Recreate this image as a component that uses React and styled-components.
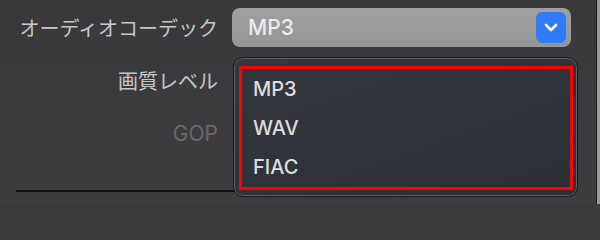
import styled, { createGlobalStyle } from 'styled-components';

const GlobalStyle = createGlobalStyle`
    html, body {
        margin: 0;
        padding: 0;
        background: #3b3b3d;
        overflow: hidden;
    }
`;

const Window = styled.div`
    display: flex;
    width: 600px;
    height: 204px;
    overflow: hidden;
`;

const Panel = styled.div`
    position: relative;
    width: 596px;
    height: 204px;
    flex-shrink: 0;
    background: linear-gradient(180deg, #39393b 0%, #3d3d3f 100%);
    font-family: Inter, "Noto Sans CJK JP", sans-serif;
`;

const Edge = styled.div`
    width: 1px;
    background: #1e1e20;
`;

const Neighbor = styled.div`
    flex: 1;
    background: #9a9a9c;
`;

const Form = styled.div`
    display: grid;
    grid-template-columns: 202px 339px;
    column-gap: 14px;
    padding: 8px 0 0 16px;
`;

const Label = styled.div`
    height: ${(p) => p.$h}px;
    display: flex;
    align-items: center;
    justify-content: flex-end;
    font-family: Inter, "Noto Sans CJK JP", sans-serif;
    font-size: ${(p) => (p.$disabled ? 21 : 20)}px;
    color: ${(p) => (p.$disabled ? '#69696b' : '#c6c6c8')};
`;

const Select = styled.div`
    height: 39px;
    display: flex;
    align-items: center;
    justify-content: space-between;
    padding: 0 5px 0 16px;
    box-sizing: border-box;
    border-radius: 8px;
    background: linear-gradient(180deg, #a0a0a2 0%, #969698 100%);
`;

const SelectValue = styled.span`
    font-size: 21px;
    color: #ececec;
    font-weight: 500;
`;

const ArrowButton = styled.div`
    width: 30px;
    height: 31px;
    border-radius: 6px;
    background: #2f7bf5;
    display: flex;
    align-items: center;
    justify-content: center;
`;

const Spacer = styled.div``;

const Separator = styled.div`
    grid-column: 1 / 3;
    height: 2px;
    width: 220px;
    background: #111113;
    margin-top: 37px;
`;

const Menu = styled.div`
    position: absolute;
    left: 233px;
    top: 57px;
    width: 345px;
    height: 140px;
    box-sizing: border-box;
    border-radius: 10px;
    border: 1px solid #1c1c1e;
    box-shadow: inset 0 0 0 1px #5d5e62;
    background: linear-gradient(160deg, #34373d 0%, #2c2f35 100%);
    padding: 8px 4px 6px 5px;
`;

const Highlight = styled.div`
    height: 100%;
    box-sizing: border-box;
    border: 3px solid #ff0000;
    display: flex;
    flex-direction: column;
    padding: 0 0 0 11px;
`;

const Item = styled.div`
    height: 39.5px;
    display: flex;
    align-items: center;
    font-size: 20px;
    font-weight: 500;
    color: #dcdcde;
`;

const Chevron = () => (
    <svg width="14" height="9" viewBox="0 0 14 9">
        <path d="M2 2 L7 7 L12 2" fill="none" stroke="#fff" strokeWidth="2.6" strokeLinecap="round" strokeLinejoin="round" />
    </svg>
);

const App = () => {
    const codecs = ['MP3', 'WAV', 'FIAC'];

    return (
        <>
            <GlobalStyle />
            <Window>
                <Panel>
                    <Form>
                        <Label $h={39}>オーディオコーデック</Label>
                        <Select>
                            <SelectValue>MP3</SelectValue>
                            <ArrowButton>
                                <Chevron />
                            </ArrowButton>
                        </Select>
                        <Label $h={66}>画質レベル</Label>
                        <Spacer />
                        <Label $h={40} $disabled>GOP</Label>
                        <Spacer />
                        <Separator />
                    </Form>
                    <Menu>
                        <Highlight>
                            {codecs.map((c) => (
                                <Item key={c}>{c}</Item>
                            ))}
                        </Highlight>
                    </Menu>
                </Panel>
                <Edge />
                <Neighbor />
            </Window>
        </>
    );
};

export default App;
